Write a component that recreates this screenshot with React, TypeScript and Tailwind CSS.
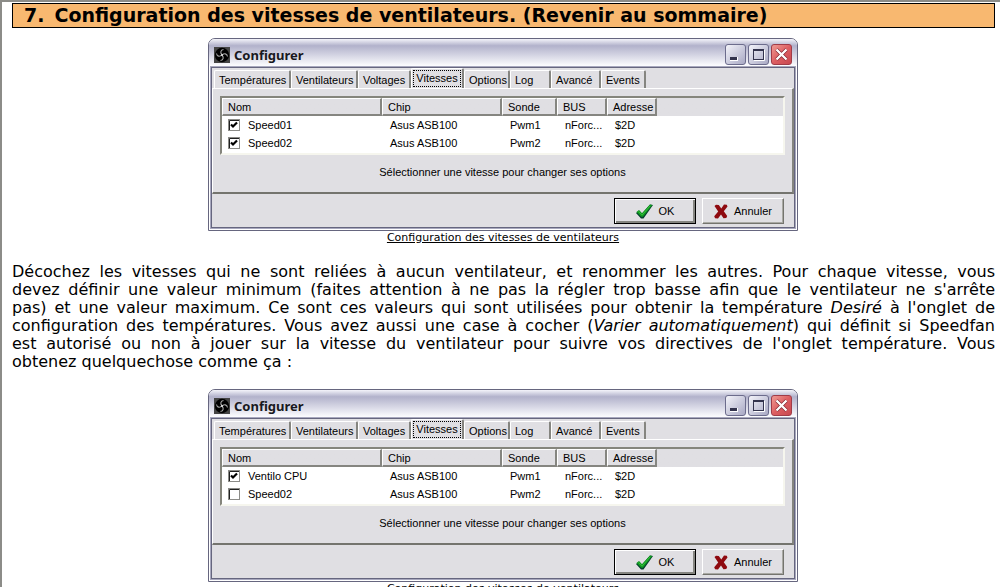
import { useState } from "react";

type Speed = { name: string; probe: string; enabled: boolean };

const TABS = [
  { label: "Températures", width: "w-[77px]" },
  { label: "Ventilateurs", width: "w-[67px]" },
  { label: "Voltages", width: "w-[53px]" },
  { label: "Vitesses", width: "w-[53px]" },
  { label: "Options", width: "w-[46px]" },
  { label: "Log", width: "w-[41px]" },
  { label: "Avancé", width: "w-[50px]" },
  { label: "Events", width: "w-[45px]" },
];

const COLUMNS = [
  { label: "Nom", width: "w-[160px]" },
  { label: "Chip", width: "w-[120px]" },
  { label: "Sonde", width: "w-[55px]" },
  { label: "BUS", width: "w-[50px]" },
  { label: "Adresse", width: "w-[50px]" },
];

function FanIcon() {
  return (
    <svg width="16" height="16" viewBox="0 0 16 16" aria-hidden="true">
      <rect width="16" height="16" fill="#444" />
      <circle cx="8" cy="8" r="7.200" fill="#000" />
      <g fill="none" stroke="#a4a4a4" strokeWidth="1.100">
        <path d="M8 7.500C6 6 6.500 3 9.500 2.500" />
        <path d="M8.500 8c1.500-2 4.500-1.500 5 1.500" />
        <path d="M8 8.500c2 1.500 1.500 4.500-1.500 5" />
        <path d="M7.500 8c-1.500 2-4.500 1.500-5-1.500" />
      </g>
      <rect x="7" y="7" width="2" height="2" fill="#d0d0d0" />
    </svg>
  );
}

function CaptionButtons() {
  const silver =
    "flex size-[21px] items-center justify-center rounded-[3px] border border-[#6c6c8c] bg-linear-to-br from-[#f4f4fa] to-[#a9a9c4]";
  return (
    <div className="flex gap-[2px]">
      <button type="button" aria-label="Réduire" className={silver}>
        <svg width="19" height="19" viewBox="0 0 19 19">
          <rect x="4" y="12" width="8" height="4" fill="#fff" />
          <rect x="4" y="12" width="7" height="3" fill="#33334d" />
        </svg>
      </button>
      <button type="button" aria-label="Agrandir" className={silver}>
        <svg width="19" height="19" viewBox="0 0 19 19">
          <path d="M15.500 5v10.500H5" fill="none" stroke="#fff" />
          <rect x="4.500" y="4.500" width="10" height="10" fill="none" stroke="#33334d" />
          <path d="M4 5h11" stroke="#33334d" strokeWidth="2" />
        </svg>
      </button>
      <button
        type="button"
        aria-label="Fermer"
        className="flex size-[21px] items-center justify-center rounded-[3px] border border-[#a03c48] bg-linear-to-br from-[#ee9a94] via-[#dd5e62] to-[#c84850]"
      >
        <svg width="19" height="19" viewBox="0 0 19 19">
          <path d="M4.500 4.500l10 10M14.500 4.500l-10 10" stroke="#7c2430" strokeWidth="3.600" />
          <path d="M4.500 4.500l10 10M14.500 4.500l-10 10" stroke="#fff" strokeWidth="2.400" />
        </svg>
      </button>
    </div>
  );
}

function CheckMark() {
  return (
    <svg width="17" height="15" viewBox="0 0 17 15" aria-hidden="true">
      <path d="M0 9L3 6.500l3 3L14 .5l3 .5L7.500 14.500H5z" fill="#06402e" />
      <path d="M.5 8L3 6l3 3.300L14 .5l2.300.5L7 12.800H5.200z" fill="#109c20" />
      <path d="M2.500 7.500l3.700 3.500L14 2" fill="none" stroke="#40c448" strokeWidth=".8" />
    </svg>
  );
}

function CrossMark() {
  return (
    <svg width="14" height="15" viewBox="0 0 14 15" aria-hidden="true">
      <path
        d="M.5 2L2 .8l2.800.2L7.300 4.500 10 .5l2.800.3.7 1.700L9.800 7.300l3.400 4.700-.9 2-2.800.3L7 10.500l-3 4-2.900-.2-.9-2L4.200 7.500z"
        fill="#8e0a10"
      />
    </svg>
  );
}

function ConfigWindow({ id, speeds }: { id: string; speeds: Speed[] }) {
  const [rows, setRows] = useState(speeds);
  const [active, setActive] = useState("Vitesses");
  const toggle = (index: number) =>
    setRows(rows.map((row, i) => (i === index ? { ...row, enabled: !row.enabled } : row)));
  const action =
    "flex h-[26px] w-[82px] items-center justify-center gap-[6px] border";

  return (
    <section
      aria-label="Configurer"
      className="mx-auto w-full max-w-[590px] rounded-t-[7px] border border-[#66667f] bg-white text-left font-['Liberation_Sans',Arial,sans-serif] text-[11px] leading-[14px] text-black"
    >
      <header className="flex h-[27px] items-center gap-[4px] rounded-t-[6px] bg-linear-to-b from-[#f4f4fa] via-[#b2b2cb] via-25% to-[#fdfdff] pt-[4px] pr-[5px] pl-[5px]">
        <FanIcon />
        <h3 className="flex-1 font-['Noto_Sans','Open_Sans',sans-serif] text-[13px] leading-[18px] font-bold text-[#181820]">
          Configurer
        </h3>
        <CaptionButtons />
      </header>
      <div className="mx-px mb-px border border-[#a8a8be]">
        <div className="border border-[#66667f] bg-[#e0dfe3]">
          <div role="tablist" className="flex h-[20px] items-end pl-[2px]">
            {TABS.map((tab) => {
              const selected = tab.label === active;
              return (
                <button
                  key={tab.label}
                  type="button"
                  role="tab"
                  aria-selected={selected}
                  onClick={() => setActive(tab.label)}
                  className={`${tab.width} shrink-0 rounded-t-[2px] border-t border-r-2 border-l border-t-white border-r-[#858580] border-l-white whitespace-nowrap ${
                    selected ? "h-[20px] p-px" : "h-[18px] pl-[4px] text-left"
                  }`}
                >
                  {selected ? (
                    <span className="block h-full border border-dotted border-black leading-[14px]">
                      {tab.label}
                    </span>
                  ) : (
                    tab.label
                  )}
                </button>
              );
            })}
          </div>
          <div className="border-t border-r-2 border-b-2 border-l border-t-white border-r-[#858580] border-b-[#74746e] border-l-white px-[7px] pt-[7px]">
            <div className="border-2 border-t-[#85857c] border-r-[#f6f6ee] border-b-[#f6f6ee] border-l-[#85857c] bg-white">
              <div className="bg-linear-to-b from-[#e0dfe3] from-[18px] to-white to-[18px] pb-[1px]">
                <table className="table-fixed border-collapse text-left">
                  <thead>
                    <tr className="h-[18px]">
                      {COLUMNS.map((column) => (
                        <th
                          key={column.label}
                          scope="col"
                          className={`${column.width} p-0 font-normal`}
                        >
                          <div className="h-[18px] border-t border-r-2 border-b-2 border-l border-t-white border-r-[#858580] border-b-[#858580] border-l-white pl-[5px] leading-[16px]">
                            {column.label}
                          </div>
                        </th>
                      ))}
                    </tr>
                  </thead>
                  <tbody>
                    {rows.map((row, index) => (
                      <tr key={row.name} className="h-[18px]">
                        <td className="p-0 pl-[6px]">
                          <label
                            htmlFor={`${id}-${index}`}
                            className="flex items-center gap-[8px]"
                          >
                            <input
                              id={`${id}-${index}`}
                              type="checkbox"
                              checked={row.enabled}
                              onChange={() => toggle(index)}
                              className="sr-only"
                            />
                            <svg width="12" height="12" viewBox="0 0 12 12" aria-hidden="true">
                              <rect x=".5" y=".5" width="11" height="11" fill="#fff" stroke="#8c8c88" />
                              <path d="M1.500 11V1.500H11" fill="none" stroke="#202020" />
                              {row.enabled && (
                                <path d="M3 5.500l2 2 4-4" fill="none" stroke="#000" strokeWidth="2.200" />
                              )}
                            </svg>
                            {row.name}
                          </label>
                        </td>
                        <td className="p-0 pl-[8px]">Asus ASB100</td>
                        <td className="p-0 pl-[8px]">{row.probe}</td>
                        <td className="p-0 pl-[8px]">nForc...</td>
                        <td className="p-0 pl-[8px]">$2D</td>
                      </tr>
                    ))}
                  </tbody>
                </table>
              </div>
            </div>
            <p className="pt-[10px] pb-[13px] text-center">
              Sélectionner une vitesse pour changer ses options
            </p>
          </div>
          <div className="flex justify-end gap-[6px] pt-[4px] pr-[10px] pb-[3px]">
            <button
              type="button"
              className={`${action} border-black shadow-[inset_1px_1px_0_#fff,inset_-2px_-2px_0_#858580]`}
            >
              <CheckMark />
              OK
            </button>
            <button
              type="button"
              className={`${action} border-t-white border-r-[#74746e] border-b-[#74746e] border-l-white shadow-[inset_-1px_-1px_0_#a9a9a4]`}
            >
              <CrossMark />
              Annuler
            </button>
          </div>
        </div>
      </div>
    </section>
  );
}

function Figure({ id, speeds }: { id: string; speeds: Speed[] }) {
  return (
    <figure className="pr-px">
      <ConfigWindow id={id} speeds={speeds} />
      <figcaption className="text-center text-[11px] leading-[14px] underline">
        Configuration des vitesses de ventilateurs
      </figcaption>
    </figure>
  );
}

export default function App() {
  return (
    <div className="h-screen overflow-hidden border-t-2 border-l-2 border-[#8c8c88] bg-white">
      <main className="flex flex-col pt-px pr-[5px] pl-[10px] font-[Verdana,'DejaVu_Sans',sans-serif] text-black">
        <h2 className="flex gap-[10px] border border-black bg-[#f8b870] pl-[11px] text-[19px] leading-[23px] font-bold whitespace-nowrap">
          <span>7.</span>
          <span>
            Configuration des vitesses de ventilateurs. (<a href="#sommaire">Revenir au sommaire</a>)
          </span>
        </h2>
        <div className="pt-[10px]">
          <Figure
            id="initial"
            speeds={[
              { name: "Speed01", probe: "Pwm1", enabled: true },
              { name: "Speed02", probe: "Pwm2", enabled: true },
            ]}
          />
        </div>
        <p className="py-[18px] text-[16px] leading-[18px]">
          <span className="block [text-align-last:justify]">
            Décochez les vitesses qui ne sont reliées à aucun ventilateur, et renommer les autres.
            Pour chaque vitesse, vous
          </span>
          <span className="block [text-align-last:justify]">
            devez définir une valeur minimum (faites attention à ne pas la régler trop basse afin que
            le ventilateur ne s'arrête
          </span>
          <span className="block [text-align-last:justify]">
            pas) et une valeur maximum. Ce sont ces valeurs qui sont utilisées pour obtenir la
            température <em>Desiré</em> à l'onglet de
          </span>
          <span className="block [text-align-last:justify]">
            configuration des températures. Vous avez aussi une case à cocher (
            <em>Varier automatiquement</em>) qui définit si Speedfan
          </span>
          <span className="block [text-align-last:justify]">
            est autorisé ou non à jouer sur la vitesse du ventilateur pour suivre vos directives de
            l'onglet température. Vous
          </span>
          <span className="block">obtenez quelquechose comme ça :</span>
        </p>
        <Figure
          id="renamed"
          speeds={[
            { name: "Ventilo CPU", probe: "Pwm1", enabled: true },
            { name: "Speed02", probe: "Pwm2", enabled: false },
          ]}
        />
      </main>
    </div>
  );
}
